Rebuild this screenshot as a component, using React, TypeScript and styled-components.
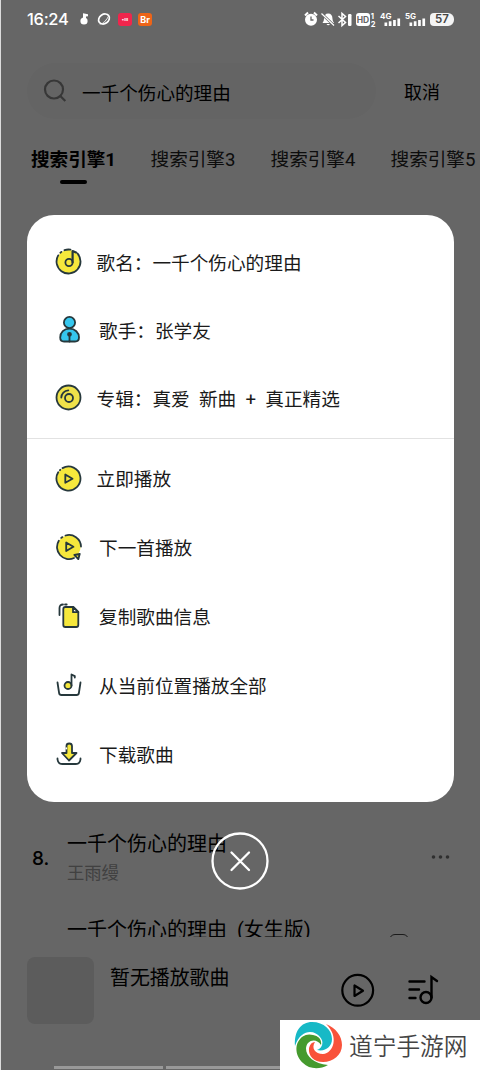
import type { ReactNode } from 'react'
import styled, { createGlobalStyle } from 'styled-components'

const GlobalStyle = createGlobalStyle`
  * {
    box-sizing: border-box;
  }
  body {
    margin: 0;
    background: #fff;
    font-family: Roboto, "Noto Sans CJK SC", sans-serif;
    color: #000;
  }
`
const Screen = styled.div`
  position: relative;
  display: flex;
  flex-direction: column;
  width: 480px;
  height: 1070px;
  overflow: hidden;
  border-left: 1px solid #dcdcdc;
  background: #fff;
  white-space: nowrap;
`
const StatusBar = styled.div`
  position: relative;
  z-index: 3;
  display: flex;
  align-items: center;
  justify-content: space-between;
  height: 38px;
  padding: 0 26px 0 26px;
  color: #fff;
`
const StatusGroup = styled.div<{ $gap: number }>`
  display: flex;
  align-items: center;
  gap: ${(p) => p.$gap}px;
`
const Clock = styled.span`
  font-family: Inter, sans-serif;
  font-size: 16.5px;
  font-weight: 500;
  line-height: 20px;
  width: 43px;
  margin-right: 2px;
  letter-spacing: -0.3px;
`
const AppBadge = styled.span<{ $color: string; $size: number }>`
  display: flex;
  align-items: center;
  justify-content: center;
  width: 14px;
  height: 13px;
  border-radius: 3px;
  background: ${(p) => p.$color};
  font-family: Inter, sans-serif;
  font-size: ${(p) => p.$size}px;
  font-weight: 700;
  line-height: 1;
`
const Battery = styled.span`
  display: flex;
  align-items: center;
  justify-content: center;
  width: 24px;
  height: 13px;
  border-radius: 4px 6px 6px 4px;
  background: #f4f4f4;
  color: #444;
  font-family: Inter, sans-serif;
  font-size: 11.5px;
  font-weight: 600;
  line-height: 13px;
`
const SearchBar = styled.div`
  display: flex;
  align-items: center;
  height: 56px;
  margin-top: 25px;
  padding: 0 40px 0 26px;
`
const SearchField = styled.div`
  display: flex;
  align-items: center;
  width: 349px;
  height: 56px;
  padding-left: 16px;
  border-radius: 28px;
  background: #fafafa;
  gap: 14px;
  font-size: 18.6px;
`
const Cancel = styled.div`
  margin-left: auto;
  font-size: 18px;
`
const Tabs = styled.div`
  display: flex;
  padding: 27px 0 0 30px;
  height: 67px;
`
const Tab = styled.div<{ $active?: boolean }>`
  display: flex;
  flex-direction: column;
  align-items: center;
  flex: none;
  width: ${(p) => (p.$active ? 85 : 86)}px;
  margin-right: 34px;
  color: ${(p) => (p.$active ? '#000' : '#222')};
  font-size: 18.6px;
  font-weight: ${(p) => (p.$active ? 700 : 400)};
  line-height: 28px;

  &::after {
    content: '';
    display: ${(p) => (p.$active ? 'block' : 'none')};
    width: 27px;
    height: 4px;
    margin-top: 6px;
    border-radius: 2px;
    background: #000;
  }
`
const SongList = styled.div`
  margin-top: auto;
  height: 123px;
  overflow: hidden;
`
const Song = styled.div`
  display: flex;
  height: 86px;
  padding: 15px 30px 0 31px;
`
const SongIndex = styled.div`
  width: 35px;
  padding-top: 16px;
  font-family: Inter, sans-serif;
  font-size: 19px;
  font-weight: 500;
  line-height: 28px;
`
const SongInfo = styled.div`
  flex: 1;
`
const SongTitle = styled.div`
  font-size: 20px;
  line-height: 30px;
  white-space: pre;
`
const Artist = styled.div`
  color: #a2a2a2;
  font-size: 17.3px;
  line-height: 28px;
`
const More = styled.div`
  padding-top: 17px;
`
const Badge = styled.div`
  width: 20px;
  height: 20px;
  margin: 19px 41px 0 0;
  border: 1px solid #444;
  border-radius: 6px;
`
const Player = styled.div`
  display: flex;
  height: 133px;
  padding: 20px 41px 0 26px;
  border-radius: 28px 28px 0 0;
  background: #fefefe;
`
const Cover = styled.div`
  width: 67px;
  height: 67px;
  border-radius: 8px;
  background: #e6e6e6;
`
const PlayerTitle = styled.div`
  flex: 1;
  padding: 7px 0 0 16px;
  font-size: 19.9px;
  line-height: 30px;
`
const PlayerButtons = styled.div`
  display: flex;
  gap: 32px;
  padding-top: 16px;
`
const Mask = styled.div`
  position: absolute;
  inset: 0 0 0 -1px;
  z-index: 2;
  display: flex;
  flex-direction: column;
  align-items: center;
  padding-top: 215px;
  background: rgba(0, 0, 0, 0.6);
`
const Dialog = styled.div`
  width: 427px;
  height: 587px;
  border-radius: 27px;
  background: #fff;
  color: #1a1a1a;
`
const InfoGroup = styled.div`
  height: 224px;
  padding-top: 13px;
  border-bottom: 1px solid #e2e2e2;
`
const ActionGroup = styled.div`
  padding-top: 5px;
`
const Row = styled.div<{ $height: number; $indent?: number }>`
  display: flex;
  align-items: center;
  height: ${(p) => p.$height}px;
  padding-left: 27px;
  gap: ${(p) => 13 + (p.$indent ?? 0)}px;

  svg {
    flex: none;
  }
`
const RowText = styled.span`
  padding-bottom: 2px;
  font-size: 18.65px;
  white-space: pre;
`
const CloseButton = styled.div`
  display: flex;
  margin-top: 30px;
`
const Watermark = styled.div`
  position: absolute;
  right: 0;
  bottom: 0;
  z-index: 4;
  display: flex;
  align-items: center;
  width: 200px;
  height: 50px;
  padding-left: 13px;
  gap: 6px;
  background: #fff;
`
const WatermarkText = styled.span`
  padding-bottom: 1px;
  color: #444;
  font-family: "Noto Sans CJK SC", sans-serif;
  font-size: 23.7px;
  font-weight: 350;
`
const HomeIndicator = styled.div`
  position: absolute;
  left: 53px;
  bottom: 1px;
  z-index: 3;
  display: flex;
  gap: 3px;
`
const IndicatorBar = styled.div<{ $width: number }>`
  width: ${(p) => p.$width}px;
  height: 3px;
  background: #999;
`

const ink = '#26383c'
const yellow = '#f6e83c'

const LineIcon = ({ children }: { children: ReactNode }) => (
  <svg width="30" height="30" viewBox="0 0 30 30" fill="none" stroke={ink} strokeWidth="1.8" strokeLinecap="round" strokeLinejoin="round">
    {children}
  </svg>
)

const SongIcon = () => (
  <LineIcon>
    <circle cx="14.5" cy="14.5" r="11.5" fill={yellow} stroke="none" />
    <path d="M23.4 6.4A12 12 0 1 1 4.2 8.4M6.4 5.7l1-.8M10.5 3.2a12 12 0 0 1 6-.5" />
    <circle cx="15" cy="15.5" r="3.6" />
    <path d="M18.6 15.500V4l3.400 1.400" strokeWidth="2.200" />
  </LineIcon>
)
const SingerIcon = () => (
  <LineIcon>
    <circle cx="15.500" cy="7.500" r="5.600" fill="#35c7ee" />
    <path d="M10 26.500h11c3.200 0 4-1.300 4-4 0-5-4-8.800-9.500-8.800S6.200 17.500 6.200 22.500c0 2.700.8 4 3.800 4z" fill="#35c7ee" />
    <circle cx="15.500" cy="19.300" r="1.500" fill={ink} />
    <path d="M15.500 20v6.500" />
  </LineIcon>
)
const AlbumIcon = () => (
  <LineIcon>
    <circle cx="14.500" cy="14.500" r="12" fill="#eee14a" />
    <circle cx="15" cy="15" r="4" />
    <path d="M7.300 14.500a7.300 7.300 0 0 1 7-7.200" />
  </LineIcon>
)
const PlayIcon = () => (
  <LineIcon>
    <circle cx="14.500" cy="14.500" r="11.500" fill={yellow} stroke="none" />
    <path d="M8.500 4.100A12 12 0 1 1 4.200 8.300M5.900 6.200l.4-.4M11.300 10.500v8.300l7.200-4.100z" />
  </LineIcon>
)
const NextIcon = () => (
  <LineIcon>
    <circle cx="15" cy="14" r="11.500" fill={yellow} stroke="none" />
    <path d="M11.500 2.500A12 12 0 0 1 27 13.500M20 25A12 12 0 0 1 4.800 7.800M7.200 4.900l1.200-.8M12.200 9.500V18l7.200-4.200z" />
    <path d="M20.300 21.800l5.500-1-1.500 5.400z" fill={yellow} />
  </LineIcon>
)
const CopyIcon = () => (
  <LineIcon>
    <path d="M5.500 13V6q0-3.500 3.500-3.500M11 2.500h1.700" />
    <path d="M9.300 7q0-2 2-2h8l5 5v13q0 2-2 2h-11q-2 0-2-2z" fill={yellow} />
    <path d="M19 5v5.200h5.300z" fill="#fff" />
  </LineIcon>
)
const PlayAllIcon = () => (
  <LineIcon>
    <path d="M3.500 11.500L5.100 22q.3 2 2.300 2h15.200q2 0 2.300-2l1.600-10.500" />
    <circle cx="14" cy="14.500" r="3.500" fill={yellow} />
    <path d="M17.500 14.500V3.500l3.300 1.600v1.400" />
  </LineIcon>
)
const DownloadIcon = () => (
  <LineIcon>
    <path d="M3.500 18.500v.8q.5 4.700 5 4.700h13q4.500 0 5-4.700v-.8" />
    <path d="M12.500 6q0-2.500 2.700-2.500T18 6v7h4.500L15 20.500 8 13h4.500z" fill={yellow} />
    <path d="M12.300 8v.8" stroke="#fff" strokeWidth="1.600" />
  </LineIcon>
)

const SearchIcon = () => (
  <svg width="25" height="25" viewBox="0 0 25 25" fill="none" stroke="#8a8a8a" strokeWidth="2.200">
    <circle cx="11" cy="10.500" r="9" />
    <path d="M17.300 17l5 5" />
  </svg>
)

const AppNotices = () => (
  <svg width="34" height="16" viewBox="0 0 34 16" fill="#fff">
    <circle cx="6" cy="10" r="3.600" />
    <path d="M5 8V2.300l5 1v2L8 5.500V8z" />
    <ellipse cx="26" cy="8" rx="5.800" ry="4.600" fill="none" stroke="#fff" strokeWidth="1.700" transform="rotate(-35 26 8)" />
    <path d="M19.500 14.500q8-2 12-12.500-2 10.500-12 12.500z" />
  </svg>
)

const SystemIcons = () => (
  <svg width="123" height="18" viewBox="0 0 123 18" fill="#fff" fontFamily="Inter, sans-serif" fontWeight="700">
    <circle cx="7" cy="9.700" r="6" />
    <path d="M1 5.500l3-3M13 5.500l-3-3" stroke="#fff" strokeWidth="2" />
    <path d="M7 6.500v3.500h2.500" stroke="#666" strokeWidth="1.300" fill="none" />
    <path d="M18.500 13q1.500-2 1.500-4 0-5.500 4.200-5.500T28.500 9q0 2 1.500 4zM22.500 14h3.500q-1.800 2.500-3.500 0z" />
    <path d="M18 4l12 11.500" stroke="#666" strokeWidth="2.500" />
    <path d="M17.500 3.500l12.500 12" stroke="#fff" strokeWidth="1.200" />
    <path d="M34.500 6l7 6.500-3.500 3v-12l3.500 3-7 6.500" fill="none" stroke="#fff" strokeWidth="1.500" />
    <rect x="44" y="4" width="3.500" height="12" rx="1.200" />
    <rect x="52" y="3" width="14" height="13" rx="3" />
    <text x="59" y="12.700" fontSize="8.500" fill="#666" textAnchor="middle">HD</text>
    <text x="66.800" y="8.500" fontSize="7.500">1</text>
    <text x="66.800" y="16.500" fontSize="7.500">2</text>
    <text x="76" y="8.500" fontSize="8">4G</text>
    <path d="M80.500 12.500h2.700V16h-2.700zM84.800 11.300h2.700V16h-2.700zM89.100 10h2.700v6h-2.700zM93.400 8.500h2.700V16h-2.700z" />
    <text x="101" y="8.500" fontSize="8">5G</text>
    <path d="M105.500 12.500h2.700V16h-2.700zM109.800 11.300h2.700V16h-2.700zM114.100 10h2.700v6h-2.700zM118.400 8.500h2.700V16h-2.700z" />
  </svg>
)

const Logo = () => (
  <svg width="50" height="48" viewBox="0 0 50 48">
    <path d="M2 25C1 10 8 1 19 1c12 0 20 8 20 17 0 8-7 13-15 11 6-2 7-9 3-13C22 9 8 7 2 25z" fill="#17b9c6" />
    <path d="M33 3c10 4 16 12 16 21 0 10-9 17-19 17-9 0-15-6-14-14 1-4 3-6 6-6-4 6 0 12 8 12 11-1 16-18 3-30z" fill="#f9523a" />
    <path d="M35 44c-9 5-19 4-25-2-7-6-8-15-5-21 3-6 9-9 15-7 6 1 9 5 8 10-3-5-9-6-13-2-6 8 2 21 20 22z" fill="#459a2e" />
  </svg>
)

const infoRows = [
  { text: '歌名：一千个伤心的理由', icon: <SongIcon />, indent: 0 },
  { text: '歌手：张学友', icon: <SingerIcon />, indent: 2.5 },
  { text: '专辑：真爱  新曲  +  真正精选', icon: <AlbumIcon />, indent: 0 },
]
const actionRows = [
  { text: '立即播放', icon: <PlayIcon />, indent: 0 },
  { text: '下一首播放', icon: <NextIcon />, indent: 2.5 },
  { text: '复制歌曲信息', icon: <CopyIcon />, indent: 2.5 },
  { text: '从当前位置播放全部', icon: <PlayAllIcon />, indent: 2.5 },
  { text: '下载歌曲', icon: <DownloadIcon />, indent: 2.5 },
]

const App = () => {
  return (
    <>
      <GlobalStyle />
      <Screen>
        <StatusBar>
          <StatusGroup $gap={6}>
            <Clock>16:24</Clock>
            <AppNotices />
            <AppBadge $color="#f0254c" $size={5}>•ııı</AppBadge>
            <AppBadge $color="#ee6418" $size={9}>Br</AppBadge>
          </StatusGroup>
          <StatusGroup $gap={3}>
            <SystemIcons />
            <Battery>57</Battery>
          </StatusGroup>
        </StatusBar>

        <SearchBar>
          <SearchField>
            <SearchIcon />
            一千个伤心的理由
          </SearchField>
          <Cancel>取消</Cancel>
        </SearchBar>

        <Tabs>
          <Tab $active>搜索引擎1</Tab>
          <Tab>搜索引擎3</Tab>
          <Tab>搜索引擎4</Tab>
          <Tab>搜索引擎5</Tab>
        </Tabs>

        <SongList>
          <Song>
            <SongIndex>8.</SongIndex>
            <SongInfo>
              <SongTitle>一千个伤心的理由</SongTitle>
              <Artist>王雨缦</Artist>
            </SongInfo>
            <More>
              <svg width="19" height="8" viewBox="0 0 19 8" fill="#777">
                <circle cx="2.500" cy="4" r="1.800" />
                <circle cx="9.500" cy="4" r="1.800" />
                <circle cx="16.500" cy="4" r="1.800" />
              </svg>
            </More>
          </Song>
          <Song>
            <SongIndex>9.</SongIndex>
            <SongInfo>
              <SongTitle>一千个伤心的理由  (女生版)</SongTitle>
            </SongInfo>
            <Badge />
          </Song>
        </SongList>

        <Player>
          <Cover />
          <PlayerTitle>暂无播放歌曲</PlayerTitle>
          <PlayerButtons>
            <svg width="34" height="34" viewBox="0 0 34 34" fill="none" stroke="#000" strokeWidth="2.200" strokeLinejoin="round">
              <circle cx="16.700" cy="17.300" r="15.400" />
              <path d="M13.500 12.500V23l8.500-5.200z" />
            </svg>
            <svg width="32" height="34" viewBox="0 0 32 34" fill="none" stroke="#000" strokeWidth="2.400" strokeLinecap="round">
              <path d="M2.500 8.500h15M2.500 16.500h9.500M2.500 25h6M24.500 24.500V4l5.500 4" />
              <circle cx="19" cy="24.500" r="5.500" />
            </svg>
          </PlayerButtons>
        </Player>

        <Mask>
          <Dialog>
            <InfoGroup>
              {infoRows.map((row) => (
                <Row key={row.text} $height={68} $indent={row.indent}>
                  {row.icon}
                  <RowText>{row.text}</RowText>
                </Row>
              ))}
            </InfoGroup>
            <ActionGroup>
              {actionRows.map((row) => (
                <Row key={row.text} $height={69} $indent={row.indent}>
                  {row.icon}
                  <RowText>{row.text}</RowText>
                </Row>
              ))}
            </ActionGroup>
          </Dialog>
          <CloseButton>
            <svg width="58" height="58" viewBox="0 0 58 58" fill="none" stroke="#fff" strokeWidth="2.300" strokeLinecap="round">
              <circle cx="29" cy="29" r="27.500" />
              <path d="M20.500 20.500l17.500 17.500M38 20.500L20.500 38" />
            </svg>
          </CloseButton>
        </Mask>

        <HomeIndicator>
          <IndicatorBar $width={109} />
          <IndicatorBar $width={140} />
        </HomeIndicator>
        <Watermark>
          <Logo />
          <WatermarkText>道宁手游网</WatermarkText>
        </Watermark>
      </Screen>
    </>
  )
}

export default App
